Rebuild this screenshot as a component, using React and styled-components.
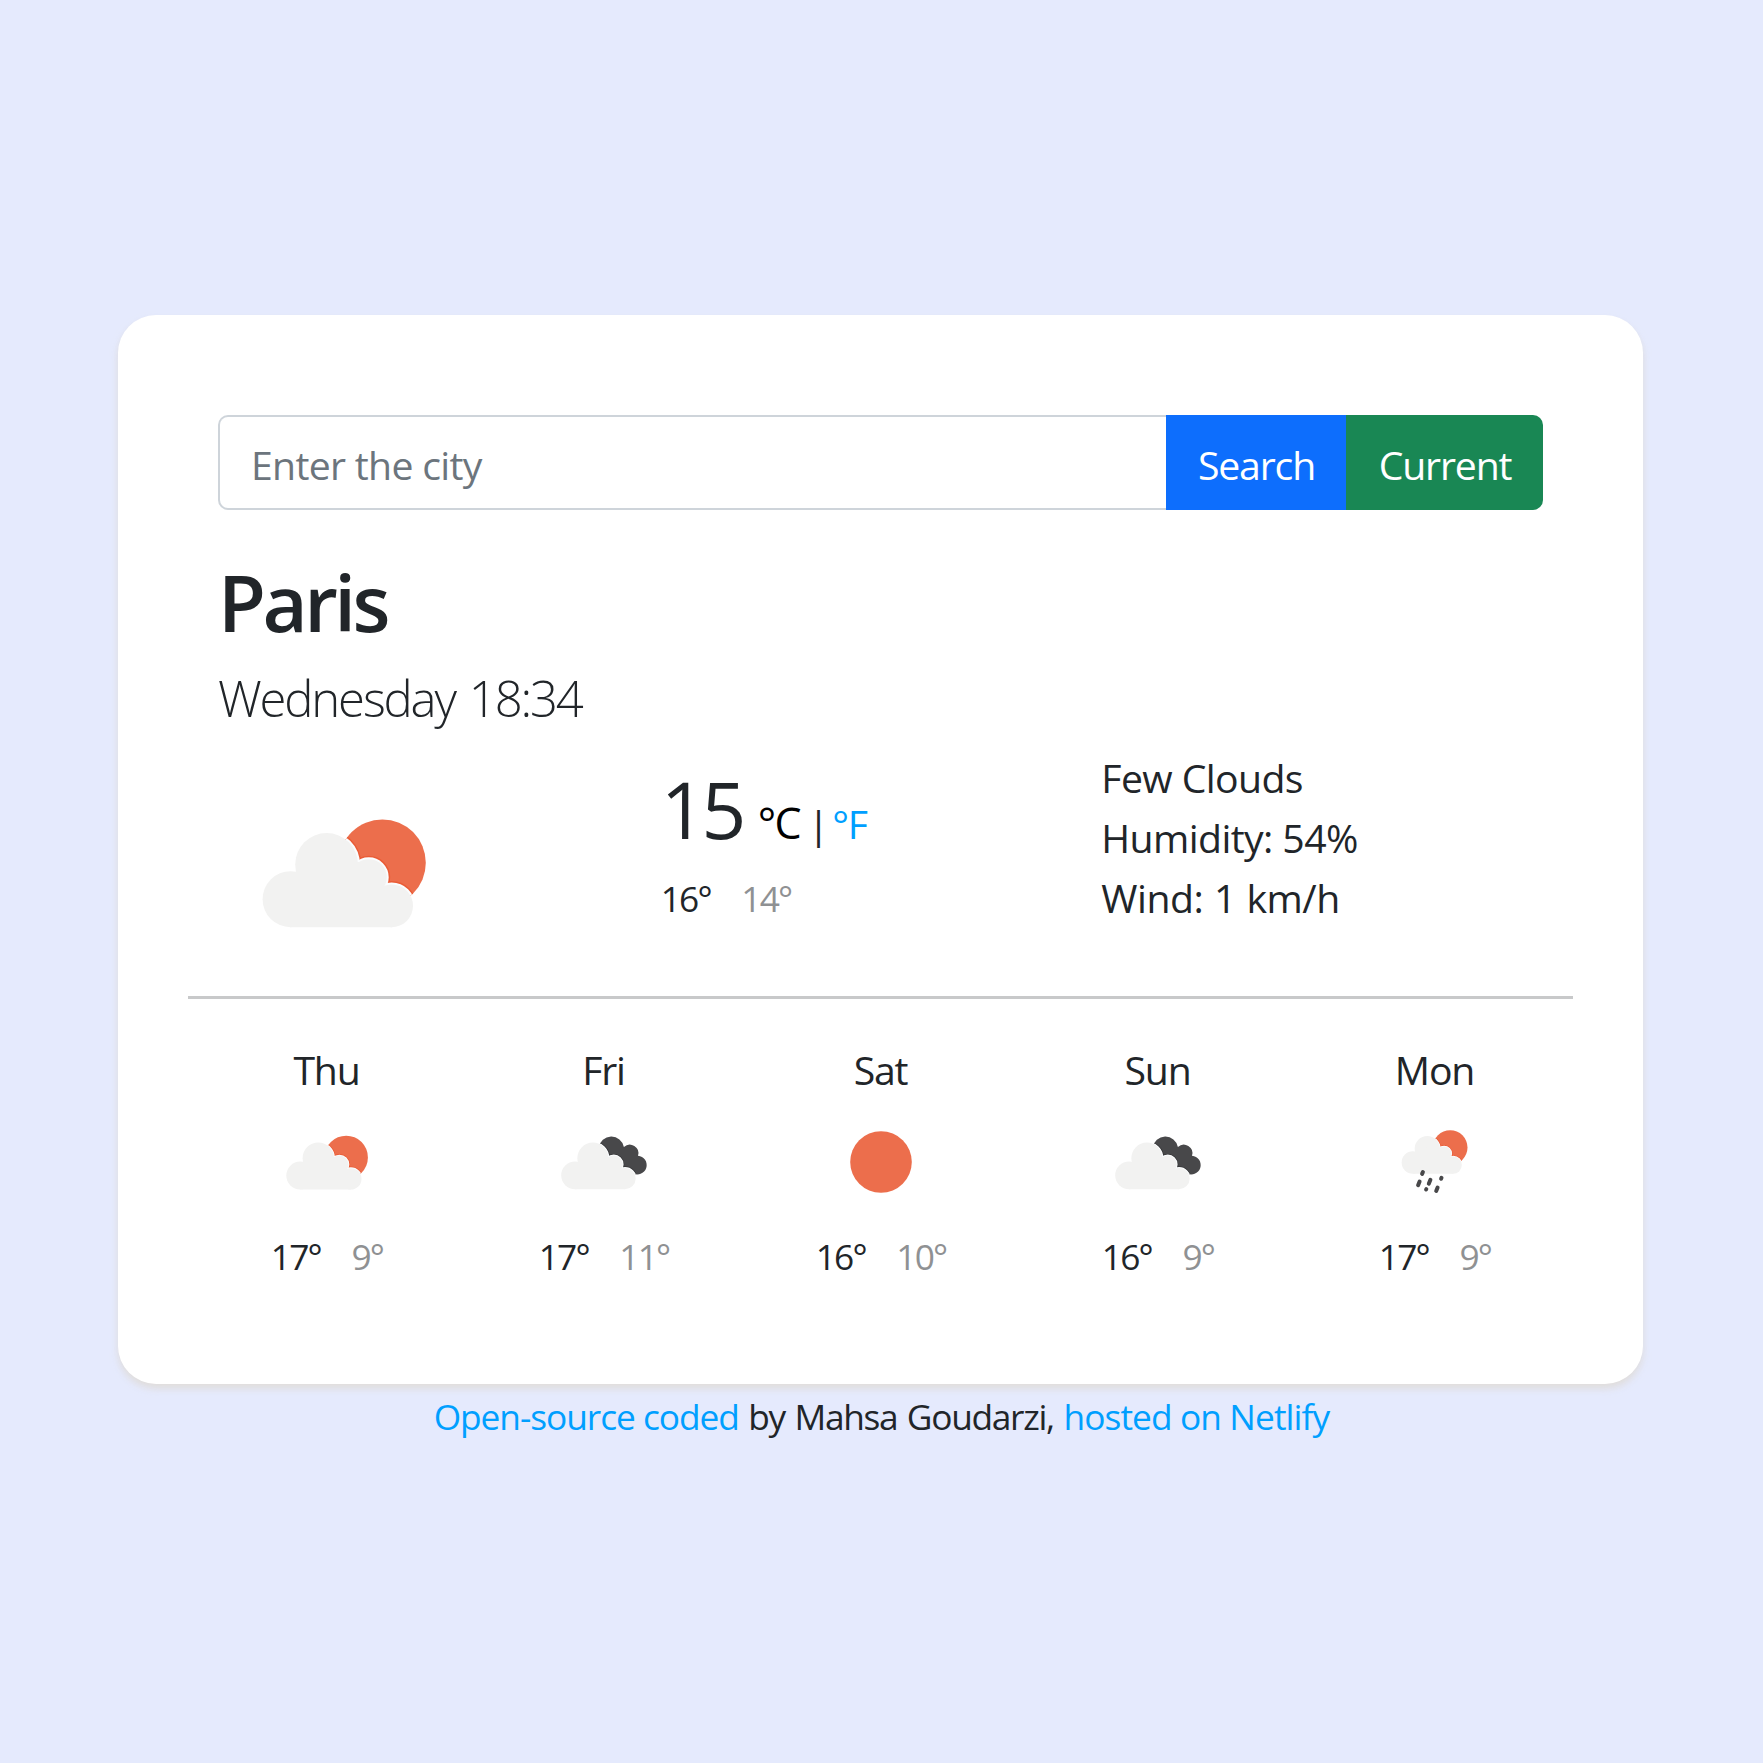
import React, { useId } from "react";
import styled, { createGlobalStyle } from "styled-components";

const GlobalStyle = createGlobalStyle`
  *, *::before, *::after { box-sizing: border-box; }
  body {
    margin: 0;
    min-height: 100vh;
    background: #e5eafd;
    color: #212529;
    font-family: "Open Sans", "Noto Sans", sans-serif;
    font-size: 39.2px;
    line-height: 60px;
  }
`;

const Page = styled.div`
  padding: 315px 120px 0 118px;
`;

const Card = styled.main`
  height: 1069px;
  padding: 100px 100px 0;
  background: #fff;
  border-radius: 38px;
  box-shadow: 0 5px 8px -1px rgba(225, 215, 195, 0.6), 0 4px 8px rgba(0, 0, 0, 0.025);
`;

const Text = styled.span`
  white-space: nowrap;
  letter-spacing: ${(p) => p.$track || 0}px;
  word-spacing: ${(p) => p.$words || 0}px;
`;

const SearchForm = styled.form`
  display: flex;
  height: 95px;
`;

const CityInput = styled.input`
  flex: 1;
  min-width: 0;
  padding: 4px 32px 0 31px;
  border: 2px solid #ced4da;
  border-right: 0;
  border-radius: 10px 0 0 10px;
  outline: 0;
  background: #fff;
  font: inherit;
  letter-spacing: -0.7px;
  &::placeholder {
    color: #6c757d;
    opacity: 1;
  }
`;

const Button = styled.button`
  width: ${(p) => p.$width}px;
  padding: 4px 0 0 1px;
  border: 0;
  border-radius: ${(p) => (p.$last ? "0 10px 10px 0" : 0)};
  background: ${(p) => p.$color};
  color: #fff;
  font: inherit;
  letter-spacing: -1.15px;
`;

const City = styled.h1`
  margin: 44px 0 0;
  font-size: 78px;
  font-weight: 600;
  line-height: 96px;
  letter-spacing: -3.5px;
`;

const DateLine = styled.h2`
  margin: 18px 0 0;
  font-size: 49px;
  font-weight: 300;
  line-height: 60px;
  letter-spacing: -2.15px;
  word-spacing: 3.5px;
`;

const Now = styled.section`
  display: grid;
  grid-template-columns: repeat(3, 1fr);
  height: 223px;
  margin-top: 20px;
`;

const NowIcon = styled.div`
  padding: 24px 0 0 26px;
`;

const Drawing = styled.svg`
  display: block;
  width: ${(p) => p.$size}px;
  height: ${(p) => p.$size}px;
`;

const Readout = styled.div`
  display: flex;
  align-items: baseline;
  height: 96px;
  margin: 13px 0 14px;
`;

const Degrees = styled.span`
  width: 86px;
  padding-left: 1px;
  font-size: 78.4px;
  line-height: 96px;
  letter-spacing: -4px;
`;

const Celsius = styled.span`
  width: 50px;
  margin-left: 12px;
  color: #000;
  font-size: 43px;
  letter-spacing: -1.5px;
`;

const Link = styled.a`
  color: #009fff;
  text-decoration: none;
  letter-spacing: ${(p) => p.$track || 0}px;
  margin-left: ${(p) => p.$left || 0}px;
`;

const Range = styled.div`
  display: flex;
  justify-content: ${(p) => (p.$center ? "center" : "flex-start")};
  gap: 30.5px;
  padding-left: 1px;
  font-size: 35.3px;
  line-height: 54px;
  letter-spacing: -1.8px;
`;

const Low = styled.span`
  opacity: 0.5;
`;

const Details = styled.ul`
  margin: 0;
  padding: 0;
  list-style: none;
`;

const Divider = styled.hr`
  height: 3px;
  margin: 25px -30px 41px;
  border: 0;
  background: #c8c9ca;
`;

const Forecast = styled.section`
  display: grid;
  grid-template-columns: repeat(5, 1fr);
  margin: 0 -30px;
`;

const Day = styled.div`
  display: flex;
  flex-direction: column;
  align-items: center;
`;

const DayIcon = styled.div`
  padding: 12px 0 17px;
`;

const Footer = styled.footer`
  display: flex;
  justify-content: center;
  padding: 5px 0 0 2px;
  font-size: 35.3px;
  line-height: 54px;
`;

const SUN = "#ec6e4c";
const DARK = "#48484a";

const CloudShape = () => (
  <>
    <circle cx="23.3" cy="63.6" r="14" />
    <circle cx="41.3" cy="46.2" r="15.7" />
    <circle cx="62.4" cy="52.6" r="9" />
    <circle cx="73.8" cy="66.9" r="10.7" />
    <path d="M23.2 77.6V60L41 45H62L70 58L74 77.6Z" />
  </>
);

function Cloud({ back, edge, transform }) {
  const id = useId();
  return (
    <>
      <clipPath id={id}>{back}</clipPath>
      {back}
      <g clipPath={`url(#${id})`}>
        <g transform={transform} fill={edge} stroke={edge} strokeWidth="3.4">
          <CloudShape />
        </g>
        <g transform={transform} fill="#fff" stroke="#fbfdfe" strokeWidth="1.9">
          <CloudShape />
        </g>
      </g>
      <g transform={transform} fill="#f2f2f1">
        <CloudShape />
      </g>
    </>
  );
}

function WeatherIcon({ kind, size = 100 }) {
  return (
    <Drawing $size={size} viewBox="0 0 100 100" role="img" aria-label={kind}>
      {kind === "clear" && <circle cx="50" cy="50" r="30.8" fill={SUN} />}
      {kind === "few-clouds" && (
        <Cloud edge="#ea5c36" back={<circle cx="69.2" cy="45.4" r="21.7" fill={SUN} />} />
      )}
      {kind === "broken-clouds" && (
        <Cloud
          edge="#333335"
          transform="translate(-2 .4) scale(.99)"
          back={
            <path
              fill={DARK}
              d="M44.8 35.7A12.7 12.7 0 0 1 69.9 35A8.6 8.6 0 0 1 84 43.8A9.3 9.3 0 1 1 78.5 61L60 56Z"
            />
          }
        />
      )}
      {kind === "rain" && (
        <>
          <Cloud
            edge="#ea5c36"
            transform="translate(9.2 -.4) scale(.8)"
            back={<circle cx="65.2" cy="35.5" r="17.3" fill={SUN} />}
          />
          <g stroke={DARK} strokeWidth="4" strokeLinecap="round">
            <path d="M37.9 60L37.1 61.9M34.6 69.6L33.1 73.2M45.4 67.8L43.8 71.7M56.5 65.8L56.1 66.8M41.3 77.2L41.1 77.5M52.6 75.6L51.2 79" />
          </g>
        </>
      )}
    </Drawing>
  );
}

const details = [
  { text: "Few Clouds", track: -0.6 },
  { text: "Humidity: 54%", track: -0.6 },
  { text: "Wind: 1 km/h", track: -0.5, words: 1 },
];

const days = [
  { name: "Thu", kind: "few-clouds", high: 17, low: 9 },
  { name: "Fri", kind: "broken-clouds", high: 17, low: 11 },
  { name: "Sat", kind: "clear", high: 16, low: 10 },
  { name: "Sun", kind: "broken-clouds", high: 16, low: 9 },
  { name: "Mon", kind: "rain", high: 17, low: 9 },
];

export default function App() {
  return (
    <Page>
      <GlobalStyle />
      <Card>
        <SearchForm onSubmit={(e) => e.preventDefault()}>
          <CityInput type="text" placeholder="Enter the city" />
          <Button type="submit" $width={180} $color="#0d6efd">Search</Button>
          <Button type="button" $width={197} $color="#198754" $last>Current</Button>
        </SearchForm>
        <City>Paris</City>
        <DateLine>Wednesday 18:34</DateLine>
        <Now>
          <NowIcon>
            <WeatherIcon kind="few-clouds" size={200} />
          </NowIcon>
          <div>
            <Readout>
              <Degrees>15</Degrees>
              <Celsius>°C</Celsius>
              <span>|</span>
              <Link href="#" $left={3} $track={-1.2}>°F</Link>
            </Readout>
            <Range>
              <span>16°</span>
              <Low>14°</Low>
            </Range>
          </div>
          <Details>
            {details.map((d) => (
              <li key={d.text}>
                <Text $track={d.track} $words={d.words}>{d.text}</Text>
              </li>
            ))}
          </Details>
        </Now>
        <Divider />
        <Forecast>
          {days.map((d) => (
            <Day key={d.name}>
              <Text $track={-1.2}>{d.name}</Text>
              <DayIcon>
                <WeatherIcon kind={d.kind} />
              </DayIcon>
              <Range $center>
                <span>{d.high}°</span>
                <Low>{d.low}°</Low>
              </Range>
            </Day>
          ))}
        </Forecast>
      </Card>
      <Footer>
        <Link href="#" $track={-1.05} >Open-source coded</Link>
        <Text $track={-1.3} $words={1.6}>&nbsp;by Mahsa Goudarzi,&nbsp;</Text>
        <Link href="#" $track={-0.9}>hosted on Netlify</Link>
      </Footer>
    </Page>
  );
}
